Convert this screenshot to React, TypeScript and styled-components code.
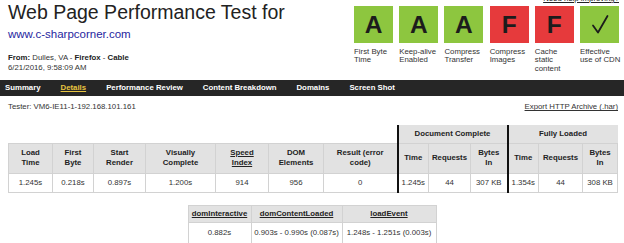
import * as React from 'react';
import styled, { createGlobalStyle } from 'styled-components';

const GlobalStyle = createGlobalStyle`
  html, body {
    margin: 0;
    padding: 0;
    background: #fff;
  }
  body {
    font-family: "Liberation Sans", Arial, sans-serif;
    color: #222;
    overflow: hidden;
  }
`;

const Page = styled.div`
  width: 624px;
  height: 243px;
  overflow: hidden;
`;

const Header = styled.div`
  height: 80px;
  display: flex;
  justify-content: space-between;
  padding: 0 5px 0 8px;
`;

const Info = styled.div`
  display: flex;
  flex-direction: column;
  padding-top: 1px;
`;

const Title = styled.h1`
  margin: 0;
  font-size: 19.5px;
  line-height: 22px;
  font-weight: normal;
  color: #222;
`;

const SiteLink = styled.a`
  margin-top: 4.3px;
  font-size: 11.5px;
  line-height: 14px;
  color: #1f1fa0;
  text-decoration: none;
`;

const Meta = styled.div`
  margin-top: 11.5px;
  font-size: 7.8px;
  line-height: 10.3px;
  color: #333;

  b {
    color: #222;
  }
`;

const Grades = styled.div`
  display: flex;
  flex-direction: column;
  align-items: flex-end;
`;

const HelpLink = styled.a`
  margin-top: -6px;
  font-size: 7.8px;
  line-height: 9px;
  color: #222;
  text-decoration: underline;
`;

const GradeRow = styled.div`
  margin-top: 3px;
  display: flex;
  gap: 6.2px;
`;

const Grade = styled.div`
  width: 39px;
  display: flex;
  flex-direction: column;
`;

const GradeBox = styled.div<{ $pass: boolean }>`
  width: 39px;
  height: 37px;
  background: ${(p) => (p.$pass ? '#8dc63f' : '#e63a3c')};
  display: flex;
  align-items: center;
  justify-content: center;
  font-size: 24.5px;
  font-weight: bold;
  color: #1c1c1c;
`;

const GradeLabel = styled.div`
  margin-top: 4.5px;
  font-size: 7.8px;
  line-height: 8.7px;
  color: #333;
  white-space: nowrap;
`;

const Nav = styled.div`
  height: 16px;
  background: #262626;
  display: flex;
  align-items: center;
  gap: 20px;
  padding-left: 5px;
`;

const NavItem = styled.a<{ $active?: boolean }>`
  font-size: 7.8px;
  font-weight: bold;
  line-height: 16px;
  color: ${(p) => (p.$active ? '#e8c440' : '#fff')};
  text-decoration: ${(p) => (p.$active ? 'underline' : 'none')};
`;

const TesterRow = styled.div`
  margin-top: 6.3px;
  padding: 0 6px 0 8px;
  display: flex;
  justify-content: space-between;
  font-size: 7.8px;
  line-height: 10px;
  color: #333;
`;

const ExportLink = styled.a`
  color: #333;
  text-decoration: underline;
`;

const ResultTable = styled.table`
  margin: 12.7px 0 0 8px;
  width: 609px;
  border-collapse: collapse;
  table-layout: fixed;
  font-size: 7.8px;
  color: #333;
`;

const GroupCell = styled.th<{ $group?: boolean }>`
  height: 18px;
  padding: 0;
  font-weight: bold;
  color: #222;
  background: ${(p) => (p.$group ? '#e2e2e2' : 'transparent')};
  border-left: ${(p) => (p.$group ? '2px solid #111' : 'none')};
`;

const HeadCell = styled.th<{ $split?: boolean }>`
  height: 29px;
  padding: 0 2px;
  font-weight: bold;
  line-height: 10.5px;
  color: #222;
  background: #e2e2e2;
  border: 1px solid #d2d2d2;
  border-left: ${(p) => (p.$split ? '2px solid #111' : '1px solid #d2d2d2')};

  u {
    text-decoration: underline;
  }
`;

const DataCell = styled.td<{ $split?: boolean }>`
  height: 18px;
  padding: 0;
  text-align: center;
  border: 1px solid #d2d2d2;
  border-left: ${(p) => (p.$split ? '2px solid #111' : '1px solid #d2d2d2')};
`;

const EventTable = styled.table`
  margin: 12px auto 0;
  width: 248px;
  border-collapse: collapse;
  table-layout: fixed;
  font-size: 7.8px;
  color: #333;
`;

const EventHead = styled.th`
  height: 16px;
  padding: 0;
  font-weight: bold;
  color: #222;
  text-decoration: underline;
  background: #e2e2e2;
  border: 1px solid #d2d2d2;
`;

const EventCell = styled.td`
  height: 20px;
  padding: 0;
  text-align: center;
  white-space: nowrap;
  border: 1px solid #d2d2d2;
`;

const CheckMark = () => (
  <svg width="39" height="37" viewBox="0 0 39 37">
    <polyline
      points="13,19.5 18,26.5 27.5,10"
      fill="none"
      stroke="#1c1c1c"
      strokeWidth="1.8"
      strokeLinecap="round"
      strokeLinejoin="round"
    />
  </svg>
);

const GRADES: { grade: string; pass: boolean; label: string[] }[] = [
  { grade: 'A', pass: true, label: ['First Byte', 'Time'] },
  { grade: 'A', pass: true, label: ['Keep-alive', 'Enabled'] },
  { grade: 'A', pass: true, label: ['Compress', 'Transfer'] },
  { grade: 'F', pass: false, label: ['Compress', 'Images'] },
  { grade: 'F', pass: false, label: ['Cache', 'static', 'content'] },
  { grade: 'check', pass: true, label: ['Effective', 'use of CDN'] },
];

const TABS = [
  'Summary',
  'Details',
  'Performance Review',
  'Content Breakdown',
  'Domains',
  'Screen Shot',
];

const COLS = [44, 41, 52, 70, 53, 55, 74, 31, 42, 37, 31, 44, 35];

const HEADERS: React.ReactNode[] = [
  <>Load<br />Time</>,
  <>First<br />Byte</>,
  <>Start<br />Render</>,
  <>Visually<br />Complete</>,
  <u>Speed<br />Index</u>,
  <>DOM<br />Elements</>,
  <>Result (error<br />code)</>,
  'Time',
  'Requests',
  <>Bytes<br />In</>,
  'Time',
  'Requests',
  <>Bytes<br />In</>,
];

const VALUES = [
  '1.245s', '0.218s', '0.897s', '1.200s', '914', '956', '0',
  '1.245s', '44', '307 KB', '1.354s', '44', '308 KB',
];

const SPLITS = [7, 10];

export default function App() {
  return (
    <Page>
      <GlobalStyle />
      <Header>
        <Info>
          <Title>Web Page Performance Test for</Title>
          <SiteLink>www.c-sharpcorner.com</SiteLink>
          <Meta>
            <b>From:</b> Dulles, VA - <b>Firefox</b> - <b>Cable</b>
            <br />
            6/21/2016, 9:58:09 AM
          </Meta>
        </Info>
        <Grades>
          <HelpLink>Need help improving?</HelpLink>
          <GradeRow>
            {GRADES.map((g, i) => (
              <Grade key={i}>
                <GradeBox $pass={g.pass}>
                  {g.grade === 'check' ? <CheckMark /> : g.grade}
                </GradeBox>
                <GradeLabel>
                  {g.label.map((line, j) => (
                    <div key={j}>{line}</div>
                  ))}
                </GradeLabel>
              </Grade>
            ))}
          </GradeRow>
        </Grades>
      </Header>

      <Nav>
        {TABS.map((t) => (
          <NavItem key={t} $active={t === 'Details'}>
            {t}
          </NavItem>
        ))}
      </Nav>

      <TesterRow>
        <span>Tester: VM6-IE11-1-192.168.101.161</span>
        <ExportLink>Export HTTP Archive (.har)</ExportLink>
      </TesterRow>

      <ResultTable>
        <colgroup>
          {COLS.map((w, i) => (
            <col key={i} style={{ width: w }} />
          ))}
        </colgroup>
        <thead>
          <tr>
            <GroupCell colSpan={7} />
            <GroupCell colSpan={3} $group>
              Document Complete
            </GroupCell>
            <GroupCell colSpan={3} $group>
              Fully Loaded
            </GroupCell>
          </tr>
          <tr>
            {HEADERS.map((h, i) => (
              <HeadCell key={i} $split={SPLITS.includes(i)}>
                {h}
              </HeadCell>
            ))}
          </tr>
        </thead>
        <tbody>
          <tr>
            {VALUES.map((v, i) => (
              <DataCell key={i} $split={SPLITS.includes(i)}>
                {v}
              </DataCell>
            ))}
          </tr>
        </tbody>
      </ResultTable>

      <EventTable>
        <colgroup>
          <col style={{ width: 63 }} />
          <col style={{ width: 91 }} />
          <col style={{ width: 94 }} />
        </colgroup>
        <thead>
          <tr>
            <EventHead>domInteractive</EventHead>
            <EventHead>domContentLoaded</EventHead>
            <EventHead>loadEvent</EventHead>
          </tr>
        </thead>
        <tbody>
          <tr>
            <EventCell>0.882s</EventCell>
            <EventCell>0.903s - 0.990s (0.087s)</EventCell>
            <EventCell>1.248s - 1.251s (0.003s)</EventCell>
          </tr>
        </tbody>
      </EventTable>
    </Page>
  );
}
